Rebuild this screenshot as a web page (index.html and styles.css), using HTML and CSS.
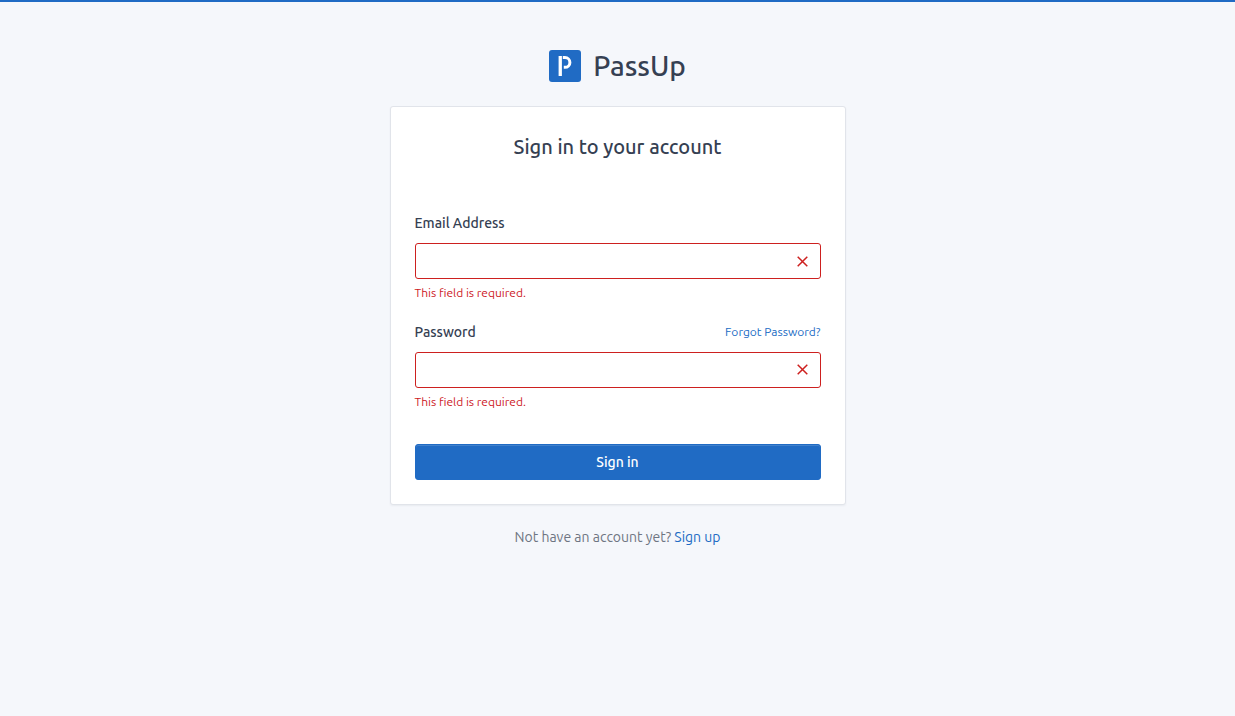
FILE: index.html
```html
<!DOCTYPE html>
<html lang="en">
<head>
<meta charset="utf-8">
<meta name="viewport" content="width=device-width, initial-scale=1">
<title>Sign in - PassUp</title>
<link rel="stylesheet" href="styles.css">
</head>
<body>
<main class="page">
  <a class="brand" href="#">
    <svg class="brand-logo" width="32" height="32" viewBox="0 0 32 32" aria-hidden="true">
      <rect width="32" height="32" rx="3" fill="#206bc4"/>
      <path d="M9.6 6h3.3v20H9.6z" fill="#fff"/>
      <path d="M13.8 7.5h2.2a4.9 4.9 0 0 1 0 9.8h-1.2" fill="none" stroke="#fff" stroke-width="3"/>
    </svg>
    <span>PassUp</span>
  </a>
  <form class="card" novalidate>
    <h1 class="card-title">Sign in to your account</h1>
    <div class="field">
      <div class="label-row"><label for="email">Email Address</label></div>
      <div class="control">
        <input class="input" id="email" type="email" aria-invalid="true" aria-describedby="email-error">
        <svg class="invalid-icon" width="16" height="16" viewBox="0 0 16 16" aria-hidden="true"><path d="M3.7 3.7l9.6 9.6M13.3 3.7l-9.6 9.6"/></svg>
      </div>
      <p class="error" id="email-error">This field is required.</p>
    </div>
    <div class="field">
      <div class="label-row"><label for="password">Password</label><a class="forgot" href="#">Forgot Password?</a></div>
      <div class="control">
        <input class="input" id="password" type="password" aria-invalid="true" aria-describedby="password-error">
        <svg class="invalid-icon" width="16" height="16" viewBox="0 0 16 16" aria-hidden="true"><path d="M3.7 2.7l9.6 9.6M13.3 2.7l-9.6 9.6"/></svg>
      </div>
      <p class="error" id="password-error">This field is required.</p>
    </div>
    <button class="submit" type="submit">Sign in</button>
  </form>
  <p class="signup">Not have an account yet? <a href="#">Sign up</a></p>
</main>
</body>
</html>
```

FILE: styles.css
```css
* {
  box-sizing: border-box;
}

body {
  margin: 0;
  min-height: 100vh;
  border-top: 2px solid #206bc4;
  background: #f5f7fb;
  color: #354052;
  font-family: Ubuntu, "Noto Sans", "Open Sans", sans-serif;
  font-size: 14px;
  line-height: 20px;
}

a {
  color: #206bc4;
  text-decoration: none;
}

.page {
  display: flex;
  flex-direction: column;
  align-items: center;
  padding: 48px 16px;
}

.brand {
  display: flex;
  align-items: center;
  gap: 12px;
  margin-bottom: 24px;
  color: #354052;
  font-size: 28px;
  font-weight: 500;
  line-height: 32px;
}

.brand-logo {
  display: block;
}

.card {
  width: 100%;
  max-width: 456px;
  padding: 24px;
  border: 1px solid #e1e4ea;
  border-radius: 3px;
  background: #fff;
  box-shadow: 0 1px 2px rgba(35, 46, 60, 0.06);
}

.card-title {
  margin: 0 0 50px;
  font-size: 20px;
  font-weight: 500;
  line-height: 32px;
  text-align: center;
}

.field {
  margin-bottom: 19px;
}

.label-row {
  display: flex;
  align-items: center;
  justify-content: space-between;
  margin: 0 0 10px;
  font-weight: 500;
}

.forgot {
  font-size: 12px;
  font-weight: 400;
}

.control {
  position: relative;
}

.input {
  display: block;
  width: 100%;
  height: 36px;
  padding: 0 36px 0 12px;
  border: 1px solid #cd201f;
  border-radius: 3px;
  background: #fff;
  color: inherit;
  font: inherit;
}

.invalid-icon {
  position: absolute;
  top: 10px;
  right: 11px;
  fill: none;
  stroke: #cd201f;
  stroke-width: 1.5;
}

.error {
  margin: 4px 0 0;
  color: #cd201f;
  font-size: 12px;
}

.submit {
  display: block;
  width: 100%;
  height: 36px;
  margin-top: 32px;
  padding: 0;
  border: 1px solid #206bc4;
  border-radius: 3px;
  background: #206bc4;
  box-shadow: inset 0 1px 0 rgba(255, 255, 255, 0.15);
  color: #fff;
  font: inherit;
  font-weight: 500;
}

.signup {
  margin: 22px 0 0;
  color: #6e7582;
}
```
